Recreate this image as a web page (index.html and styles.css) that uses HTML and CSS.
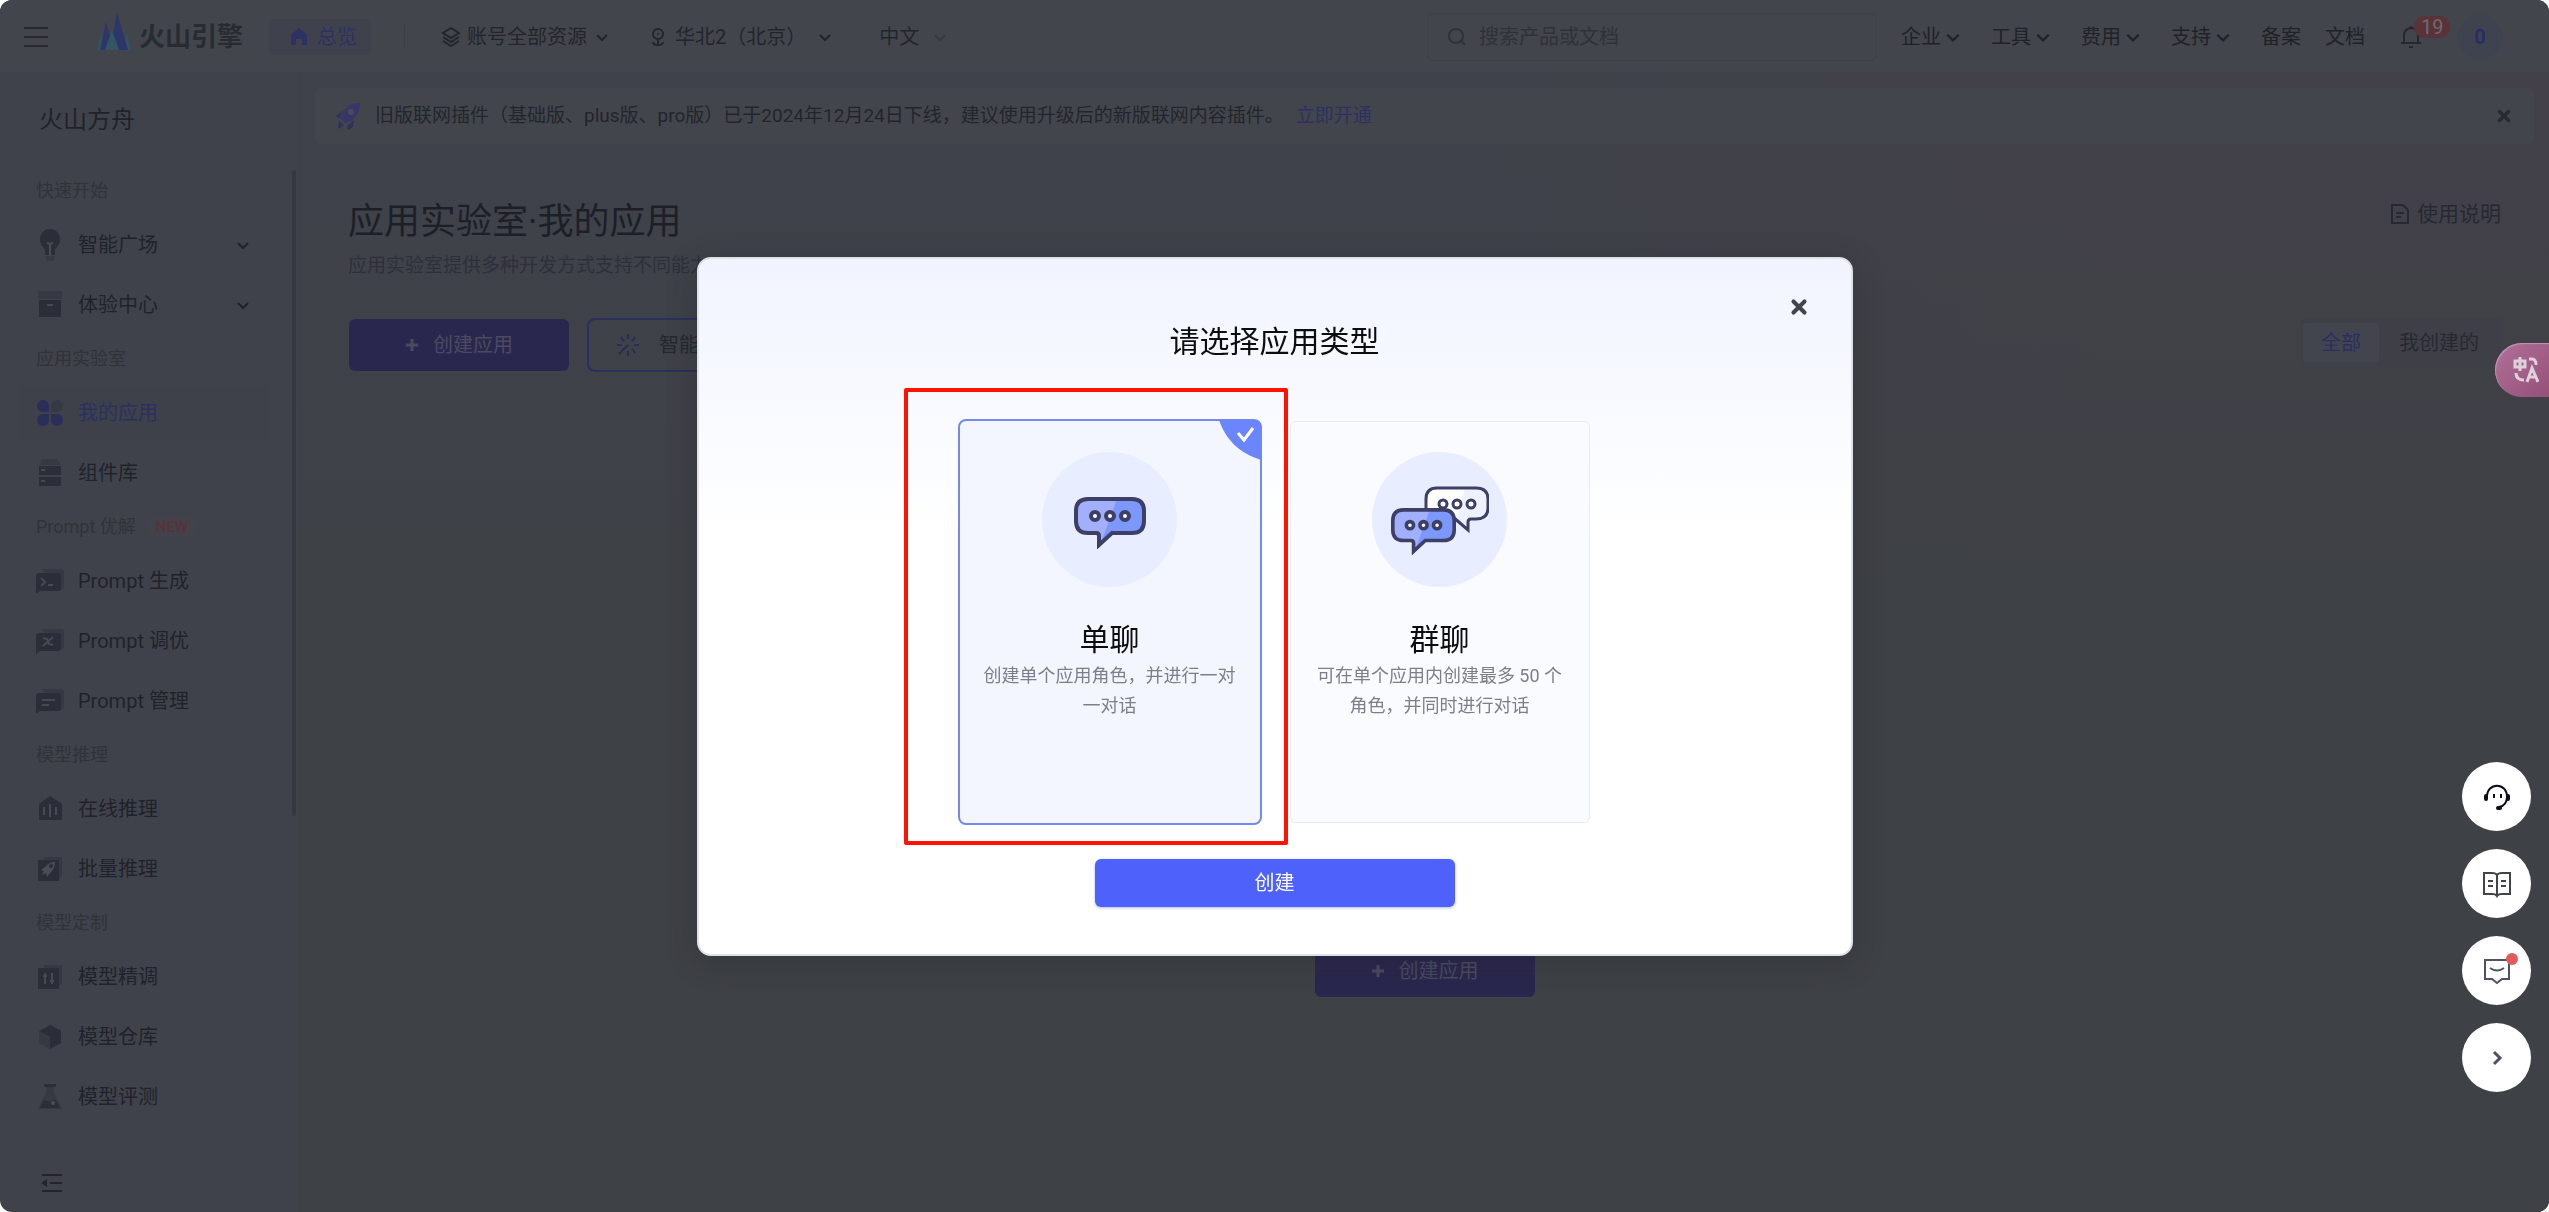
FILE: index.html
```html
<!DOCTYPE html>
<html lang="zh-CN">
<head>
  <meta charset="UTF-8">
  <title>火山方舟 - 我的应用</title>
  <meta name="viewport" content="width=device-width, initial-scale=1.0">
  <link rel="stylesheet" href="styles.css">
</head>
<body>
  <!-- Shared icons -->
  <svg class="sprite" width="0" height="0" aria-hidden="true">
    <symbol id="chevron" viewBox="0 0 14 14"><path d="M2 5l5 5 5-5" fill="none" stroke="currentColor" stroke-width="2"/></symbol>
    <symbol id="plus" viewBox="0 0 14 14"><path d="M7 1v12M1 7h12" fill="none" stroke="currentColor" stroke-width="3"/></symbol>
    <symbol id="close" viewBox="0 0 16 16"><path d="M4 4l8 8M12 4l-8 8" fill="none" stroke="currentColor" stroke-width="3" stroke-linecap="round"/></symbol>
    <symbol id="chat" viewBox="0 0 28 28"><path class="back" d="M6 2h19a3 3 0 0 1 3 3v16l-4 2z"/><path d="M3 6h19a3 3 0 0 1 3 3v12a3 3 0 0 1-3 3H4l-4 3V9a3 3 0 0 1 3-3z"/></symbol>
    <symbol id="bubble" viewBox="0 0 72 52">
      <path class="fill-a" d="M14 2h44q12 0 12 12v10q0 12-12 12H38L25 48V36H14Q2 36 2 24V14Q2 2 14 2z"/>
      <path class="fill-b" d="M43 2h15q12 0 12 12v10q0 12-12 12H38L27 46z"/>
      <path d="M14 2h44q12 0 12 12v10q0 12-12 12H38L25 48v-9q0-3-3-3h-8Q2 36 2 24V14Q2 2 14 2z" fill="none" stroke="#3e3f67" stroke-width="4"/>
      <g fill="#fff" stroke="#3e3f67" stroke-width="4"><circle cx="21" cy="19" r="4"/><circle cx="36" cy="19" r="4"/><circle cx="51" cy="19" r="4"/></g>
    </symbol>
  </svg>

  <div class="app">
    <header class="header">
      <button class="menu-btn" aria-label="菜单"><svg width="24" height="24" viewBox="0 0 24 24"><path d="M0 3h24M0 12h24M0 21h24" stroke="currentColor" stroke-width="2"/></svg></button>
      <a class="logo" href="#">
        <svg width="34" height="38" viewBox="0 0 34 38">
          <path d="M0 37l4-17 5 17zM25 37l5-18 4 18z" fill="#34525f"/>
          <path d="M3 37L9 9l8 28zM13 37L20 0l11 37z" fill="#2d3668"/>
          <path d="M8 37l7-20 7 20z" fill="#345663"/>
        </svg>
        <span>火山引擎</span>
      </a>
      <a class="overview" href="#"><svg width="16" height="18" viewBox="0 0 16 18"><path d="M8 0l8 7v10H11v-6H5v6H0V7z" fill="currentColor"/></svg>总览</a>
      <span class="divider"></span>
      <button class="top-link resource"><svg width="20" height="20" viewBox="0 0 20 20"><path d="M10 1l8 5-8 5-8-5zM2 10l8 5 8-5M2 14l8 5 8-5" fill="none" stroke="currentColor" stroke-width="2"/></svg>账号全部资源<svg class="chev" width="14" height="14"><use href="#chevron"/></svg></button>
      <button class="top-link region"><svg width="14" height="18" viewBox="0 0 14 18"><circle cx="7" cy="6" r="5" fill="none" stroke="currentColor" stroke-width="2"/><circle cx="7" cy="6" r="1" fill="currentColor"/><path d="M7 11v5M2 14c0 4 10 4 10 0" fill="none" stroke="currentColor" stroke-width="2"/></svg>华北2（北京）<svg class="chev" width="14" height="14"><use href="#chevron"/></svg></button>
      <button class="top-link lang">中文<svg class="chev faint" width="14" height="14"><use href="#chevron"/></svg></button>

      <label class="search">
        <svg width="18" height="18" viewBox="0 0 18 18"><circle cx="8" cy="8" r="7" fill="none" stroke="currentColor" stroke-width="2"/><path d="M13 13l4 4" stroke="currentColor" stroke-width="2"/></svg>
        <input type="text" placeholder="搜索产品或文档" aria-label="搜索">
      </label>
      <nav class="top-nav">
        <button>企业<svg width="16" height="16"><use href="#chevron"/></svg></button>
        <button>工具<svg width="16" height="16"><use href="#chevron"/></svg></button>
        <button>费用<svg width="16" height="16"><use href="#chevron"/></svg></button>
        <button>支持<svg width="16" height="16"><use href="#chevron"/></svg></button>
        <a href="#">备案</a>
        <a class="docs" href="#">文档</a>
      </nav>
      <button class="bell" aria-label="消息">
        <svg width="20" height="22" viewBox="0 0 20 22"><path d="M3 17V9a7 7 0 0 1 14 0v8M0 17h20M8 21h4M10 0v2" fill="none" stroke="currentColor" stroke-width="2"/></svg>
        <span class="count">19</span>
      </button>
      <button class="avatar">0</button>
    </header>

    <aside class="sidebar">
      <h2>火山方舟</h2>
      <nav class="side-nav">
        <div class="group">快速开始</div>
        <a class="item" href="#"><svg width="28" height="32" viewBox="0 0 28 32"><path d="M14 0a10 10 0 0 1 10 11c0 5-4 7-5 10v5H9v-5c-1-3-5-5-5-10A10 10 0 0 1 14 0z"/><path class="back" d="M9 27h10l-2 5h-6z"/><path class="cut" d="M11 14l3 1 3-1M14 15v11"/></svg>智能广场<svg class="chev" width="14" height="14"><use href="#chevron"/></svg></a>
        <a class="item" href="#"><svg width="28" height="28" viewBox="0 0 28 28"><path class="back" d="M2 0h24v8H2z"/><path d="M3 9h22v17H3z"/><path class="cut" d="M11 14h6"/></svg>体验中心<svg class="chev" width="14" height="14"><use href="#chevron"/></svg></a>
        <div class="group">应用实验室</div>
        <a class="item active" href="#"><svg width="28" height="28" viewBox="0 0 28 28"><path d="M13 13H8a6 6 0 1 1 5-6zM13 15v5a6 6 0 1 1-6-5zM15 15h5a6 6 0 1 1-5 6z"/><path class="back" d="M15 13V7a6 6 0 1 1 6 6z"/></svg>我的应用</a>
        <a class="item" href="#"><svg width="28" height="28" viewBox="0 0 28 28"><path class="back" d="M7 0h14l4 6H3z"/><path d="M3 7h22v9H3zM3 18h22v9H3z"/><path class="cut" d="M5 11h4M5 22h4"/></svg>组件库</a>
        <div class="group">Prompt 优解 <span class="tag">NEW</span></div>
        <a class="item" href="#"><svg width="28" height="28" viewBox="0 0 28 28"><use href="#chat"/><path class="cut" d="M5 11l4 4-4 4M12 18h5"/></svg>Prompt 生成</a>
        <a class="item" href="#"><svg width="28" height="28" viewBox="0 0 28 28"><use href="#chat"/><path class="cut" d="M7 19l10-9M7 11l4 1 2 5 4 1"/></svg>Prompt 调优</a>
        <a class="item" href="#"><svg width="28" height="28" viewBox="0 0 28 28"><use href="#chat"/><path class="cut" d="M6 13h13M6 18h7"/></svg>Prompt 管理</a>
        <div class="group">模型推理</div>
        <a class="item" href="#"><svg width="28" height="28" viewBox="0 0 28 28"><path d="M14 1l12 8v16H3V9z"/><path class="cut" d="M8 12v8M14 9v13M20 12v8"/></svg>在线推理</a>
        <a class="item" href="#"><svg width="28" height="28" viewBox="0 0 28 28"><path class="back" d="M7 2h19v19l-3 2z"/><path d="M2 5h21v21H2z"/><path d="M5 15l5-4c3-3 5-4 9-4 0 4-1 7-4 10l-4 5-1-4-4 2 2-4z" fill="#4a4d55"/><circle cx="15" cy="11" r="2"/></svg>批量推理</a>
        <div class="group">模型定制</div>
        <a class="item" href="#"><svg width="28" height="28" viewBox="0 0 28 28"><path class="back" d="M7 2h19v19l-3 2z"/><path d="M2 5h21v21H2z"/><path class="cut" d="M9 10v11M16 10v11M7 13h4M14 18h4"/></svg>模型精调</a>
        <a class="item" href="#"><svg width="28" height="28" viewBox="0 0 28 28"><path d="M14 2l11 6v12l-11 6z"/><path d="M14 2L3 8l11 6 11-6z"/><path class="back" d="M3 8l11 6v12L3 20z"/></svg>模型仓库</a>
        <a class="item" href="#"><svg width="28" height="28" viewBox="0 0 28 28"><path class="back" d="M10 4h8v6l8 16H2l8-16z"/><path d="M8 1h12v3H8zM8 17l6 2 5-3 5 9H4z"/><circle cx="17" cy="20" r="2" fill="#4a4d55"/></svg>模型评测</a>
      </nav>
      <button class="collapse" aria-label="收起"><svg width="22" height="18" viewBox="0 0 22 18"><path d="M1 1h20M9 9h12M1 17h20" stroke="currentColor" stroke-width="2"/><path d="M0 9l6-4v8z" fill="currentColor"/></svg></button>
      <span class="scrollbar"></span>
    </aside>

    <main class="main">
      <div class="notice">
        <svg width="28" height="28" viewBox="0 0 28 28"><path d="M10 20l-4-4C9 7 15 1 26 1c0 11-5 17-14 20z" fill="#373667"/><path d="M2 14l6-5-3 8zM13 24l7-6-1 7-5 3zM5 19l5 4-6 4z" fill="#30305c"/><circle cx="17" cy="10" r="3" fill="#494c58"/></svg>
        <p>旧版联网插件（基础版、plus版、pro版）已于2024年12月24日下线，建议使用升级后的新版联网内容插件。<a href="#">立即开通</a></p>
        <button aria-label="关闭通知"><svg width="18" height="18"><use href="#close"/></svg></button>
      </div>
      <div class="page-head">
        <h1>应用实验室·我的应用</h1>
        <a class="help" href="#"><svg width="18" height="20" viewBox="0 0 18 20"><path d="M1 1h11l5 5v13H1zM5 9h8M5 13h5" fill="none" stroke="currentColor" stroke-width="2"/></svg>使用说明</a>
      </div>
      <p class="subtitle">应用实验室提供多种开发方式支持不同能力</p>
      <div class="toolbar">
        <button class="create-app"><svg width="14" height="14"><use href="#plus"/></svg>创建应用</button>
        <button class="smart"><svg width="22" height="22" viewBox="0 0 22 22"><path d="M11 0v5M11 17v5M0 11h5M17 11h5M4 3l3 4M18 3l-3 4M18 19l-3-4M2 20l9-9" fill="none" stroke="#292b59" stroke-width="2"/></svg>智能创建</button>
        <div class="filter">
          <button class="on">全部</button>
          <button>我创建的</button>
        </div>
      </div>
      <div class="empty">
        <button class="create-app"><svg width="14" height="14"><use href="#plus"/></svg>创建应用</button>
      </div>
    </main>
  </div>

  <!-- Modal -->
  <div class="overlay">
    <div class="modal" role="dialog" aria-labelledby="modal-title">
      <button class="modal-close" aria-label="关闭"><svg width="22" height="22"><use href="#close"/></svg></button>
      <h2 id="modal-title">请选择应用类型</h2>
      <div class="cards">
        <div class="highlight">
          <button class="card selected">
            <svg class="corner" width="42" height="40" viewBox="0 0 42 40"><path d="M0 0C7 20 20 33 42 40V0z" fill="#6b86fc"/><path d="M19 13l6 7 9-12" fill="none" stroke="#fff" stroke-width="3"/></svg>
            <span class="circle single"><svg class="purple" width="72" height="52"><use href="#bubble"/></svg></span>
            <strong>单聊</strong>
            <span class="desc">创建单个应用角色，并进行一对一对话</span>
          </button>
        </div>
        <button class="card">
          <span class="circle">
            <svg width="98" height="70" viewBox="0 0 98 70">
              <g class="white">
                <path class="fill-a" d="M46 2h39q12 0 12 11v9q0 11-12 11h-7v12L62 33H46q-11 0-11-11v-9Q35 2 46 2z"/>
                <path class="fill-b" d="M74 2h11q12 0 12 11v9q0 11-12 11h-7v12L66 33z"/>
                <path d="M62 31l15 13v-8q0-3 3-3h5q12 0 12-11v-9Q97 2 85 2H46Q35 2 35 13v15" fill="none" stroke="#3e3f67" stroke-width="3"/>
                <g fill="#fff" stroke="#3e3f67" stroke-width="3"><circle cx="52" cy="18" r="4"/><circle cx="66" cy="18" r="4"/><circle cx="80" cy="18" r="4"/></g>
              </g>
              <g class="purple"><use href="#bubble" x="0" y="22" width="65" height="47"/></g>
            </svg>
          </span>
          <strong>群聊</strong>
          <span class="desc">可在单个应用内创建最多 50 个角色，并同时进行对话</span>
        </button>
      </div>
      <button class="submit">创建</button>
    </div>
  </div>

  <button class="translate" aria-label="翻译">
    <svg width="26" height="26" viewBox="0 0 26 26" fill="none" stroke="#ddd1dc" stroke-width="3"><path d="M2 4h10v6H2zM7 0v14M16 2h3q4 0 4 6M3 16q0 7 8 7M14 25l5-14 6 14M16 20h6"/></svg>
  </button>

  <div class="float-bar">
    <button aria-label="客服"><svg width="28" height="28" viewBox="0 0 28 28" fill="none" stroke="#0b0c18" stroke-width="2"><path d="M4 14C4-1 24-1 24 14c0 6-3 9-8 10"/><path d="M3 13v3M25 13v3M15 25h2" stroke-width="4" stroke-linecap="round"/><path d="M11 11v4M18 11v4"/></svg></button>
    <button aria-label="文档"><svg width="30" height="28" viewBox="0 0 30 28" fill="none" stroke="#42434a" stroke-width="2"><path d="M15 5c-1-2-3-2-5-2H2v21h8c2 0 4 0 5 2 1-2 3-2 5-2h8V3h-8c-2 0-4 0-5 2zv20M6 11h5M6 16h5M19 11h5M19 16h5"/></svg></button>
    <button aria-label="反馈"><svg width="28" height="28" viewBox="0 0 28 28" fill="none" stroke="#4f5165" stroke-width="2"><path d="M2 3h24v19h-7l-5 4-5-4H2zM7 11q7 5 14 0"/></svg><span class="dot"></span></button>
    <button aria-label="收起"><svg width="20" height="20" viewBox="0 0 20 20" fill="none" stroke="#4f5165" stroke-width="3"><path d="M7 4l6 6-6 6"/></svg></button>
  </div>
</body>
</html>
```
FILE: styles.css
```css
* {
  box-sizing: border-box;
}

body {
  margin: 0;
  background: #fff;
  color: #1f222a;
  font-family: Roboto, "Noto Sans CJK SC", sans-serif;
  font-size: 20px;
  line-height: 30px;
}

h1, h2, p {
  margin: 0;
  font-weight: normal;
}

a {
  color: inherit;
  text-decoration: none;
}

button {
  display: flex;
  align-items: center;
  justify-content: center;
  padding: 0;
  border: none;
  background: none;
  color: inherit;
  font: inherit;
  cursor: pointer;
}

svg {
  flex-shrink: 0;
}

.sprite {
  position: absolute;
}

.app {
  display: grid;
  grid-template-columns: 300px 1fr;
  grid-template-rows: 72px 1fr;
  height: 100vh;
  min-height: 900px;
  border-radius: 12px;
  overflow: hidden;
  background: #3f424a;
}

/* Header */
.header {
  grid-column: 1 / 3;
  display: flex;
  align-items: center;
  padding: 2px 47px 0 24px;
  background: #42454b;
  white-space: nowrap;
}

.menu-btn {
  color: #27292e;
}

.logo {
  display: flex;
  align-items: center;
  gap: 8px;
  margin: 0 26px 0 49px;
  color: #282b31;
  font-size: 26px;
  font-weight: bold;
}

.logo svg {
  margin-bottom: 10px;
}

.overview {
  display: flex;
  align-items: center;
  gap: 10px;
  height: 36px;
  padding: 0 14px 0 22px;
  border-radius: 4px;
  background: #3f424d;
  color: #2e3163;
}

.divider {
  width: 1px;
  height: 24px;
  margin: 0 36px 0 33px;
  background: #3b3e44;
}

.top-link {
  gap: 6px;
  color: #22252b;
}

.region {
  gap: 10px;
  margin-left: 42px;
}

.region .chev {
  margin-left: 2px;
}

.lang {
  gap: 14px;
  margin-left: 47px;
}

.resource .chev {
  margin-left: 2px;
}

.faint {
  color: #373a40;
}

.search {
  display: flex;
  align-items: center;
  gap: 13px;
  width: 450px;
  height: 48px;
  margin: 0 24px 0 auto;
  padding: 0 20px;
  border: 1px solid #3e4147;
  border-radius: 6px;
  color: #2f3238;
}

.search input {
  flex: 1;
  min-width: 0;
  padding: 0;
  border: none;
  outline: none;
  background: none;
  color: inherit;
  font: inherit;
}

.search input::placeholder {
  color: #2f3238;
  opacity: 1;
}

.top-nav {
  display: flex;
  gap: 30px;
  color: #1f2228;
}

.top-nav button {
  gap: 4px;
}

.top-nav .docs {
  margin-left: -6px;
}

.bell {
  position: relative;
  margin: 0 37px 0 36px;
  color: #25282e;
}

.count {
  position: absolute;
  left: 13px;
  top: -10px;
  padding: 0 7px;
  border-radius: 11px;
  background: #5a3338;
  color: #6a6b70;
  line-height: 22px;
}

.avatar {
  width: 44px;
  height: 44px;
  border-radius: 50%;
  background: #3f424f;
  color: #2a2c65;
  font-weight: bold;
}

/* Sidebar */
.sidebar {
  position: relative;
  display: flex;
  flex-direction: column;
  min-height: 0;
  border-right: 1px solid #3d4045;
}

.sidebar h2 {
  padding: 33px 39px 32px;
  font-size: 24px;
}

.side-nav {
  display: flex;
  flex: 1;
  flex-direction: column;
  overflow: hidden;
}

.group {
  display: flex;
  flex-shrink: 0;
  align-items: center;
  height: 48px;
  padding-left: 36px;
  color: #303338;
  font-size: 18px;
}

.tag {
  margin-left: 12px;
  padding: 0 8px;
  border-radius: 4px;
  background: #42424a;
  color: #5c303a;
  font-size: 15px;
  font-weight: 500;
  line-height: 20px;
}

.item {
  display: flex;
  flex-shrink: 0;
  align-items: center;
  gap: 14px;
  height: 54px;
  margin: 3px 32px 3px 21px;
  padding: 0 17px 0 15px;
  border-radius: 4px;
}

.item svg {
  fill: #2b2d38;
}

.item .back {
  fill: #363943;
}

.item .cut {
  fill: none;
  stroke: #474a52;
  stroke-width: 2px;
}

.back {
  fill: #363943;
}

.item .chev {
  margin-left: auto;
}

.item.active {
  background: #3e414a;
  color: #2c3060;
}

.item.active svg {
  fill: #2a2e59;
}

.collapse {
  width: 22px;
  margin: 20px 0 20px 41px;
  color: #23252b;
}

.scrollbar {
  position: absolute;
  top: 98px;
  right: 3px;
  width: 4px;
  height: 646px;
  border-radius: 2px;
  background: #363840;
}

/* Main */
.main {
  display: flex;
  flex-direction: column;
  padding: 16px 15px 0;
  background:
    linear-gradient(to bottom, rgba(62, 65, 70, 0), #3e4146 45%),
    linear-gradient(to right, #3f424a 50%, #434049 80%);
}

.notice {
  display: flex;
  align-items: center;
  gap: 13px;
  height: 56px;
  padding: 0 21px 0 19px;
  border-radius: 6px;
  background: #42454b;
  color: #22252c;
  font-size: 19px;
}

.notice p {
  flex: 1;
}

.notice a {
  margin-left: 12px;
  color: #2e3064;
}

.notice button {
  color: #282a30;
}

.page-head {
  display: flex;
  justify-content: space-between;
  padding: 51px 33px 0;
}

h1 {
  color: #1d1f28;
  font-size: 36px;
  line-height: 54px;
}

.help {
  display: flex;
  align-items: center;
  gap: 8px;
  height: 38px;
  color: #272932;
  font-size: 21px;
}

.subtitle {
  padding: 2px 33px 0;
  color: #2d303b;
  font-size: 19px;
}

.toolbar {
  display: flex;
  align-items: center;
  gap: 18px;
  margin-top: 37px;
  padding: 0 33px 0 34px;
}

.create-app {
  gap: 14px;
  width: 220px;
  height: 52px;
  border-radius: 6px;
  background: #2a274e;
  color: #4b4b60;
}

.smart {
  gap: 20px;
  height: 54px;
  padding: 0 28px;
  border: 2px solid #2c2e5c;
  border-radius: 8px;
  color: #25282f;
}

.filter {
  display: flex;
  align-self: flex-start;
  margin-left: auto;
  padding: 5px 2px;
  border-radius: 4px;
  background: #3f3f47;
  color: #272932;
}

.filter button {
  height: 39px;
  padding: 0 20px;
}

.filter .on {
  padding: 0 18px;
  border-radius: 3px;
  background: #42454e;
  color: #2c2d62;
}

.empty {
  display: flex;
  justify-content: center;
  margin: auto 0 215px;
}

/* Modal */
.overlay {
  position: fixed;
  inset: 0;
  display: flex;
  align-items: center;
  justify-content: center;
}

.modal {
  position: relative;
  display: flex;
  flex-direction: column;
  align-items: center;
  width: 1156px;
  padding: 61px 0 47px;
  border: 2px solid #dfe1e8;
  border-radius: 14px;
  background: linear-gradient(#f1f4ff, #fff 275px);
  box-shadow: 0 6px 30px rgba(30, 32, 38, 0.3);
}

.modal-close {
  position: absolute;
  top: 37px;
  right: 41px;
  color: #42454e;
}

.modal h2 {
  color: #0c0d0e;
  font-size: 30px;
  line-height: 44px;
}

.cards {
  display: flex;
  gap: 30px;
  margin-top: 57px;
}

.highlight {
  position: relative;
}

.highlight::before {
  content: "";
  position: absolute;
  inset: -33px -28px -22px -56px;
  border: 4px solid #ff1200;
  border-radius: 2px;
}

.card {
  position: relative;
  flex-direction: column;
  justify-content: flex-start;
  width: 300px;
  height: 402px;
  padding: 30px 20px 0;
  border: 1px solid #e8eaf0;
  border-radius: 6px;
  background: #fafbff;
}

.card.selected {
  border-color: #f3f6ff;
  background: #f3f6ff;
  outline: 2px solid #728bea;
}

.corner {
  position: absolute;
  top: -2px;
  right: -2px;
  border-top-right-radius: 6px;
}

.circle {
  display: flex;
  align-items: center;
  justify-content: center;
  width: 135px;
  height: 135px;
  padding-top: 4px;
  border-radius: 50%;
  background: #e8eeff;
}

.circle.single {
  padding-top: 8px;
}

.circle .purple {
  --a: #a2b0fb;
  --b: #7d98fb;
}

.circle .white {
  --a: #fff;
  --b: #eef2ff;
}

.fill-a {
  fill: var(--a);
}

.fill-b {
  fill: var(--b);
}

.card strong {
  margin-top: 32px;
  color: #0c0d0e;
  font-size: 30px;
  font-weight: normal;
  line-height: 42px;
}

.desc {
  color: #7c7f8b;
  font-size: 18px;
}

.submit {
  width: 360px;
  height: 48px;
  margin-top: 36px;
  border-radius: 6px;
  background: #4e61fb;
  box-shadow: 0 1px 3px rgba(60, 80, 200, 0.4);
  color: #fff;
}

/* Floating buttons */
.translate {
  position: fixed;
  top: 343px;
  right: 0;
  width: 54px;
  height: 54px;
  padding-left: 8px;
  border-radius: 27px 0 0 27px;
  background: linear-gradient(135deg, #b0709a, #965078);
  box-shadow: inset 1px 1px 1px #c394ad;
}

.float-bar {
  position: fixed;
  right: 18px;
  bottom: 120px;
  display: flex;
  flex-direction: column;
  gap: 18px;
}

.float-bar button {
  position: relative;
  width: 69px;
  height: 69px;
  border-radius: 50%;
  background: #fff;
}

.dot {
  position: absolute;
  top: 17px;
  right: 13px;
  width: 12px;
  height: 12px;
  border-radius: 50%;
  background: #e05b5b;
}
```
